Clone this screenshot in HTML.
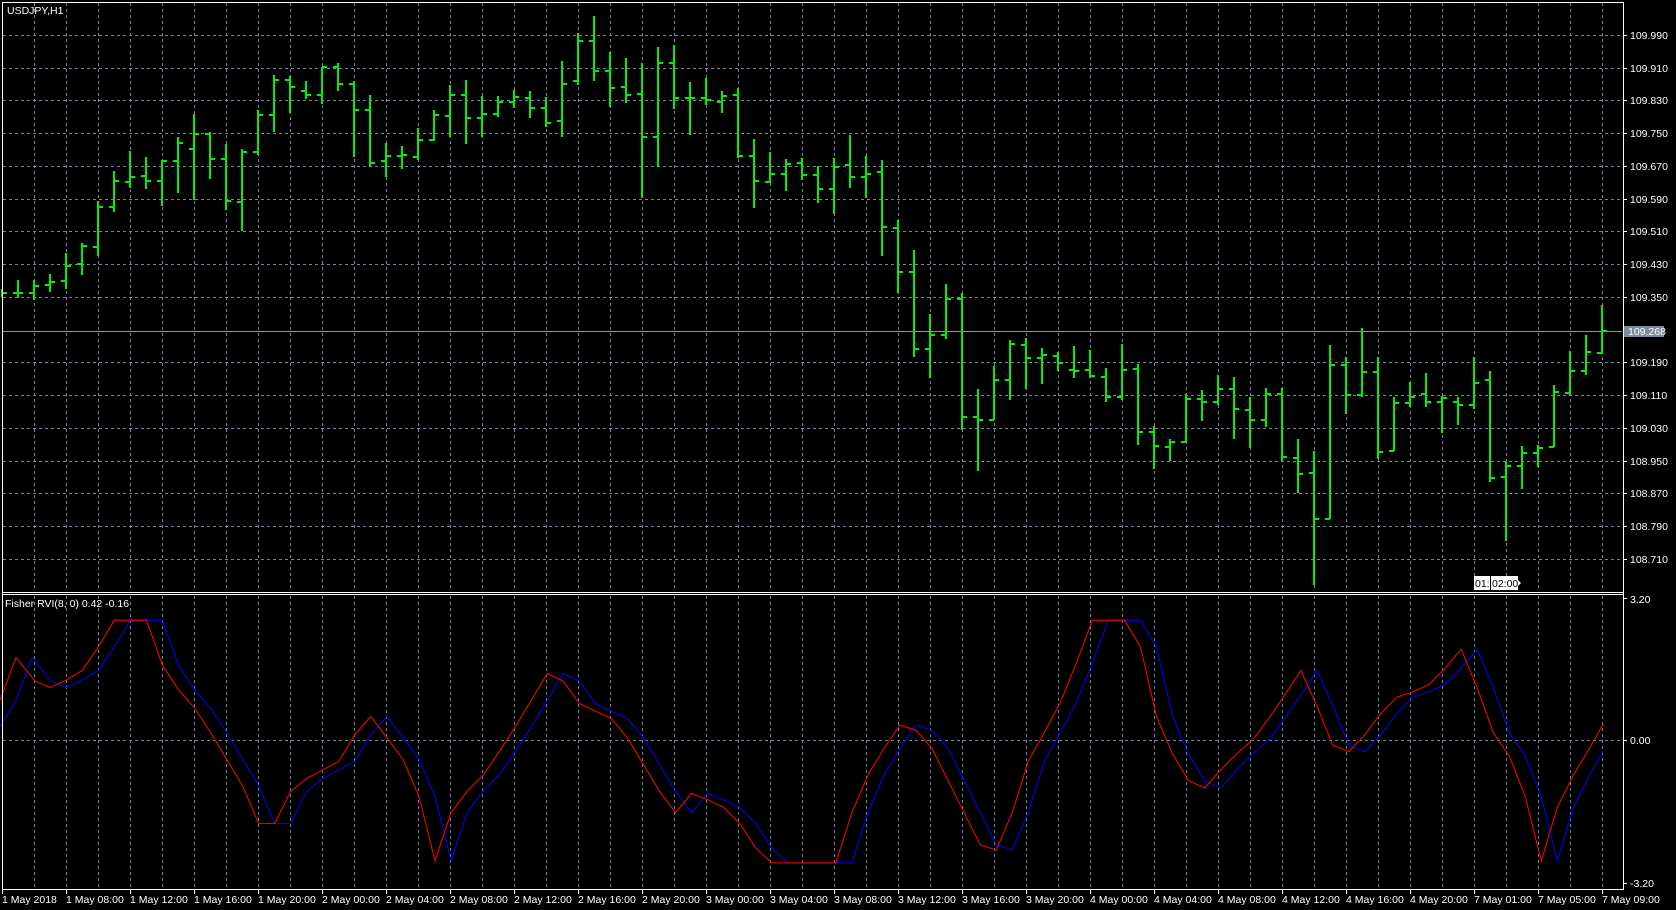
<!DOCTYPE html>
<html><head><meta charset="utf-8"><style>
html,body{margin:0;padding:0;background:#000;width:1676px;height:910px;overflow:hidden}
svg{display:block}
text{font-family:"Liberation Sans",sans-serif;fill:#fff;font-size:10.5px}
</style></head><body>
<svg width="1676" height="910" viewBox="0 0 1676 910" xmlns="http://www.w3.org/2000/svg">
<rect width="1676" height="910" fill="#000"/>
<defs>
<pattern id="vg" x="0" y="0" width="32" height="910" patternUnits="userSpaceOnUse"></pattern>
</defs>
<g stroke="#76879c" stroke-width="1" stroke-dasharray="3,3" shape-rendering="crispEdges">
<path d="M34.5 3V591M66.5 3V591M98.5 3V591M130.5 3V591M162.5 3V591M194.5 3V591M226.5 3V591M258.5 3V591M290.5 3V591M322.5 3V591M354.5 3V591M386.5 3V591M418.5 3V591M450.5 3V591M482.5 3V591M514.5 3V591M546.5 3V591M578.5 3V591M610.5 3V591M642.5 3V591M674.5 3V591M706.5 3V591M738.5 3V591M770.5 3V591M802.5 3V591M834.5 3V591M866.5 3V591M898.5 3V591M930.5 3V591M962.5 3V591M994.5 3V591M1026.5 3V591M1058.5 3V591M1090.5 3V591M1122.5 3V591M1154.5 3V591M1186.5 3V591M1218.5 3V591M1250.5 3V591M1282.5 3V591M1314.5 3V591M1346.5 3V591M1378.5 3V591M1410.5 3V591M1442.5 3V591M1474.5 3V591M1506.5 3V591M1538.5 3V591M1570.5 3V591M1602.5 3V591"/>
<path d="M34.5 596V888M66.5 596V888M98.5 596V888M130.5 596V888M162.5 596V888M194.5 596V888M226.5 596V888M258.5 596V888M290.5 596V888M322.5 596V888M354.5 596V888M386.5 596V888M418.5 596V888M450.5 596V888M482.5 596V888M514.5 596V888M546.5 596V888M578.5 596V888M610.5 596V888M642.5 596V888M674.5 596V888M706.5 596V888M738.5 596V888M770.5 596V888M802.5 596V888M834.5 596V888M866.5 596V888M898.5 596V888M930.5 596V888M962.5 596V888M994.5 596V888M1026.5 596V888M1058.5 596V888M1090.5 596V888M1122.5 596V888M1154.5 596V888M1186.5 596V888M1218.5 596V888M1250.5 596V888M1282.5 596V888M1314.5 596V888M1346.5 596V888M1378.5 596V888M1410.5 596V888M1442.5 596V888M1474.5 596V888M1506.5 596V888M1538.5 596V888M1570.5 596V888M1602.5 596V888"/>
<path d="M3 35.5H1622M3 68.5H1622M3 100.5H1622M3 133.5H1622M3 166.5H1622M3 199.5H1622M3 231.5H1622M3 264.5H1622M3 297.5H1622M3 362.5H1622M3 395.5H1622M3 428.5H1622M3 461.5H1622M3 493.5H1622M3 526.5H1622M3 559.5H1622M3 740.5H1622"/>
</g>
<path d="M3 331.5H1622" stroke="#8a96a6" stroke-width="1" shape-rendering="crispEdges"/>
<g stroke="#00f000" stroke-width="2" fill="none" shape-rendering="crispEdges">
<path d="M2 289V297M2 293H4M2 293H7
M18 280V298M13 293H18M18 293H23
M34 280V300M29 293H34M34 286H39
M50 274V292M45 285H50M50 282H55
M66 253V289M61 281H66M66 266H71
M82 243V275M77 264H82M82 246H87
M98 201V256M93 247H98M98 207H103
M114 171V212M109 207H114M114 181H119
M130 151V188M125 182H130M130 177H135
M146 157V189M141 176H146M146 181H151
M162 160V206M157 181H162M162 161H167
M178 137V193M173 161H178M178 143H183
M194 114V200M189 149H194M194 134H199
M210 132V179M205 134H210M210 159H215
M226 144V210M221 159H226M226 201H231
M242 149V231M237 202H242M242 152H247
M258 110V155M253 152H258M258 115H263
M274 75V132M269 115H274M274 80H279
M290 76V113M285 80H290M290 87H295
M306 81V99M301 91H306M306 95H311
M322 67V104M317 95H322M322 67H327
M338 63V91M333 67H338M338 84H343
M354 81V157M349 84H354M354 110H359
M370 95V167M365 110H370M370 163H375
M386 143V177M381 161H386M386 156H391
M402 146V169M397 156H402M402 155H407
M418 128V160M413 157H418M418 140H423
M434 110V141M429 140H434M434 115H439
M450 85V137M445 116H450M450 95H455
M466 80V144M461 95H466M466 118H471
M482 96V137M477 118H482M482 114H487
M498 96V117M493 114H498M498 102H503
M514 90V108M509 102H514M514 97H519
M530 91V118M525 98H530M530 108H535
M546 97V127M541 108H546M546 123H551
M562 61V137M557 121H562M562 84H567
M578 33V85M573 81H578M578 41H583
M594 16V81M589 41H594M594 71H599
M610 52V107M605 71H610M610 88H615
M626 58V103M621 87H626M626 95H631
M642 63V198M637 94H642M642 137H647
M658 47V167M653 137H658M658 63H663
M674 45V109M669 63H674M674 98H679
M690 82V135M685 98H690M690 98H695
M706 78V105M701 98H706M706 100H711
M722 91V113M717 102H722M722 96H727
M738 88V158M733 95H738M738 156H743
M754 139V208M749 156H754M754 181H759
M770 152V183M765 182H770M770 174H775
M786 159V191M781 174H786M786 164H791
M802 158V180M797 163H802M802 175H807
M818 166V203M813 175H818M818 189H823
M834 158V214M829 189H834M834 167H839
M850 135V188M845 165H850M850 177H855
M866 156V198M861 177H866M866 174H871
M882 160V256M877 172H882M882 227H887
M898 220V293M893 228H898M898 272H903
M914 250V357M909 272H914M914 349H919
M930 314V378M925 349H930M930 335H935
M946 284V339M941 335H946M946 299H951
M962 293V430M957 299H962M962 417H967
M978 389V471M973 417H978M978 420H983
M994 366V420M989 420H994M994 380H999
M1010 340V400M1005 380H1010M1010 344H1015
M1026 338V389M1021 345H1026M1026 358H1031
M1042 348V384M1037 358H1042M1042 355H1047
M1058 352V371M1053 356H1058M1058 363H1063
M1074 346V378M1069 370H1074M1074 371H1079
M1090 350V378M1085 370H1090M1090 376H1095
M1106 368V402M1101 377H1106M1106 397H1111
M1122 344V400M1117 397H1122M1122 370H1127
M1138 364V445M1133 369H1138M1138 432H1143
M1154 426V469M1149 432H1154M1154 446H1159
M1170 439V461M1165 447H1170M1170 442H1175
M1186 394V442M1181 442H1186M1186 399H1191
M1202 390V421M1197 399H1202M1202 402H1207
M1218 375V405M1213 402H1218M1218 389H1223
M1234 377V439M1229 389H1234M1234 409H1239
M1250 397V448M1245 410H1250M1250 420H1255
M1266 388V427M1261 420H1266M1266 394H1271
M1282 388V461M1277 394H1282M1282 457H1287
M1298 439V493M1293 458H1298M1298 474H1303
M1314 451V585M1309 473H1314M1314 519H1319
M1330 345V519M1325 519H1330M1330 365H1335
M1346 357V414M1341 365H1346M1346 395H1351
M1362 328V397M1357 395H1362M1362 372H1367
M1378 357V459M1373 372H1378M1378 452H1383
M1394 397V451M1389 451H1394M1394 403H1399
M1410 382V407M1405 403H1410M1410 397H1415
M1426 373V407M1421 394H1426M1426 402H1431
M1442 396V433M1437 402H1442M1442 398H1447
M1458 397V425M1453 402H1458M1458 405H1463
M1474 357V409M1469 405H1474M1474 383H1479
M1490 371V482M1485 380H1490M1490 478H1495
M1506 461V541M1501 477H1506M1506 466H1511
M1522 446V489M1517 466H1522M1522 453H1527
M1538 445V467M1533 453H1538M1538 448H1543
M1554 385V447M1549 447H1554M1554 392H1559
M1570 351V396M1565 393H1570M1570 371H1575
M1586 335V375M1581 371H1586M1586 352H1591
M1602 305V354M1597 353H1602M1602 331H1607"/>
</g>
<g transform="scale(1.06888,1.0693)" fill="none" stroke-width="0.95">
<polyline stroke="#0000ff" points="0,680 15,655 30,615 48,637 62,643 77,636 92,627 107,605 122,580 152,580 167,622 182,645 197,662 212,685 227,710 242,735 257,770 272,770 287,740 302,728 317,720 332,712 347,687 362,670 377,690 392,710 407,745 422,805 437,760 452,740 467,725 482,703 497,680 512,655 527,630 542,637 557,658 572,665 587,672 602,690 617,715 632,740 647,760 662,742 677,748 692,755 707,770 722,793 737,807 797,807 812,760 827,725 842,700 857,678 872,683 887,700 902,730 917,760 932,790 947,795 962,760 977,712 992,685 1007,657 1022,620 1037,580 1067,580 1082,605 1097,670 1112,705 1127,730 1142,737 1157,720 1172,705 1187,692 1202,672 1217,650 1232,627 1247,660 1262,697 1277,703 1292,687 1307,667 1322,652 1337,647 1352,640 1367,625 1382,607 1397,643 1412,685 1427,707 1442,745 1457,805 1472,755 1487,725 1500,702"/>
<polyline stroke="#ff0000" points="0,655 15,615 33,637 47,643 62,636 77,627 92,605 107,580 137,580 152,622 167,645 182,662 197,685 212,710 227,735 242,770 257,770 272,740 287,728 302,720 317,712 332,687 347,670 362,690 377,710 392,745 407,805 422,760 437,740 452,725 467,703 482,680 497,655 512,630 527,637 542,658 557,665 572,672 587,690 602,715 617,740 632,760 647,742 662,748 677,755 692,770 707,793 722,807 782,807 797,760 812,725 827,700 842,678 857,683 872,700 887,730 902,760 917,790 932,795 947,760 962,712 977,685 992,657 1007,620 1022,580 1052,580 1067,605 1082,670 1097,705 1112,730 1127,737 1142,720 1157,705 1172,692 1187,672 1202,650 1217,627 1232,660 1247,697 1262,703 1277,687 1292,667 1307,652 1322,647 1337,640 1352,625 1367,607 1382,643 1397,685 1412,707 1427,745 1442,805 1457,755 1472,725 1487,700 1500,677"/>
</g>
<g stroke="#fff" stroke-width="1" fill="none" shape-rendering="crispEdges">
<path d="M2.5 2.5H1623.5V889.5H2.5Z"/>
<path d="M2 592.5H1624M2 594.5H1624"/>
<path d="M1623 35.5h4M1623 68.5h4M1623 100.5h4M1623 133.5h4M1623 166.5h4M1623 199.5h4M1623 231.5h4M1623 264.5h4M1623 297.5h4M1623 330.5h4M1623 362.5h4M1623 395.5h4M1623 428.5h4M1623 461.5h4M1623 493.5h4M1623 526.5h4M1623 559.5h4M1623 598.5h4M1623 740.5h4M1623 883.5h4"/>
<path d="M2.5 889v5M66.5 889v5M130.5 889v5M194.5 889v5M258.5 889v5M322.5 889v5M386.5 889v5M450.5 889v5M514.5 889v5M578.5 889v5M642.5 889v5M706.5 889v5M770.5 889v5M834.5 889v5M898.5 889v5M962.5 889v5M1026.5 889v5M1090.5 889v5M1154.5 889v5M1218.5 889v5M1282.5 889v5M1346.5 889v5M1410.5 889v5M1474.5 889v5M1538.5 889v5M1602.5 889v5"/>
</g>
<text x="7" y="14">USDJPY,H1</text>
<text x="5" y="607">Fisher RVI(8, 0) 0.42 -0.16</text>
<g>
<text x="1630" y="39">109.990</text><text x="1630" y="72">109.910</text><text x="1630" y="104">109.830</text><text x="1630" y="137">109.750</text><text x="1630" y="170">109.670</text><text x="1630" y="203">109.590</text><text x="1630" y="235">109.510</text><text x="1630" y="268">109.430</text><text x="1630" y="301">109.350</text><text x="1630" y="366">109.190</text><text x="1630" y="399">109.110</text><text x="1630" y="432">109.030</text><text x="1630" y="465">108.950</text><text x="1630" y="497">108.870</text><text x="1630" y="530">108.790</text><text x="1630" y="563">108.710</text>
<text x="1630" y="603">3.20</text><text x="1630" y="744">0.00</text><text x="1630" y="887">-3.20</text>
</g>
<path d="M1624 326H1664V337H1624Z" fill="#7e8a99"/>
<text x="1628" y="335" style="fill:#fff">109.268</text>
<path d="M1474 576H1518V580L1521 583L1518 586V590H1474Z" fill="#fff"/>
<path d="M1490.5 576V591" stroke="#000" stroke-width="1"/>
<text x="1475" y="587" style="fill:#000">01:</text><text x="1492" y="587" style="fill:#000">02:00</text>
<g>
<text x="2" y="903">1 May 2018</text><text x="66" y="903">1 May 08:00</text><text x="130" y="903">1 May 12:00</text><text x="194" y="903">1 May 16:00</text><text x="258" y="903">1 May 20:00</text><text x="322" y="903">2 May 00:00</text><text x="386" y="903">2 May 04:00</text><text x="450" y="903">2 May 08:00</text><text x="514" y="903">2 May 12:00</text><text x="578" y="903">2 May 16:00</text><text x="642" y="903">2 May 20:00</text><text x="706" y="903">3 May 00:00</text><text x="770" y="903">3 May 04:00</text><text x="834" y="903">3 May 08:00</text><text x="898" y="903">3 May 12:00</text><text x="962" y="903">3 May 16:00</text><text x="1026" y="903">3 May 20:00</text><text x="1090" y="903">4 May 00:00</text><text x="1154" y="903">4 May 04:00</text><text x="1218" y="903">4 May 08:00</text><text x="1282" y="903">4 May 12:00</text><text x="1346" y="903">4 May 16:00</text><text x="1410" y="903">4 May 20:00</text><text x="1474" y="903">7 May 01:00</text><text x="1538" y="903">7 May 05:00</text><text x="1602" y="903">7 May 09:00</text>
</g>
</svg>
</body></html>
